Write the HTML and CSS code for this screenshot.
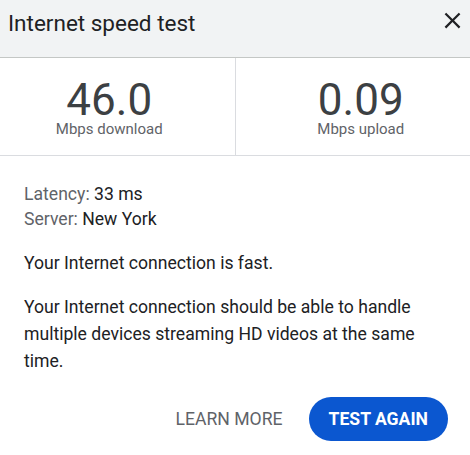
FILE: index.html
```html
<!DOCTYPE html>
<html>
<head>
<meta charset="utf-8">
<link rel="stylesheet" href="styles.css">
</head>
<body>
<div class="dialog">
  <div class="header">
    <div class="title">Internet speed test</div>
    <button class="close" aria-label="Close">
      <svg viewBox="0 0 24 24" width="27" height="27"><path d="M19 6.41 17.59 5 12 10.59 6.41 5 5 6.41 10.59 12 5 17.59 6.41 19 12 13.41 17.59 19 19 17.59 13.41 12z" fill="#202124"/></svg>
    </button>
  </div>
  <div class="stats">
    <div class="stat stat-down">
      <div class="num">46.0</div>
      <div class="unit">Mbps download</div>
    </div>
    <div class="stat stat-up">
      <div class="num">0.09</div>
      <div class="unit">Mbps upload</div>
    </div>
  </div>
  <div class="body">
    <div class="meta">
      <div><span class="key">Latency:</span> 33 ms</div>
      <div><span class="key">Server:</span> New York</div>
    </div>
    <p class="summary">Your Internet connection is fast.</p>
    <p class="desc">Your Internet connection should be able to handle multiple devices streaming HD videos at the same time.</p>
    <div class="actions">
      <button class="learn">LEARN MORE</button>
      <button class="again">TEST AGAIN</button>
    </div>
  </div>
</div>
</body>
</html>
```
FILE: styles.css
```css
html, body {
  margin: 0;
  padding: 0;
  background: #fff;
}
body {
  font-family: Roboto, "Liberation Sans", Arial, sans-serif;
  color: #202124;
}
.dialog {
  width: 470px;
}
.header {
  height: 57px;
  background: #f1f3f4;
  border-bottom: 1px solid #c4c7c5;
  display: flex;
  align-items: flex-start;
  justify-content: space-between;
  padding: 0 4px 0 8px;
}
.title {
  font-size: 22.5px;
  line-height: 28px;
  margin-top: 9px;
  color: #202124;
}
.close {
  border: 0;
  background: none;
  padding: 0;
  width: 27px;
  height: 27px;
  margin-top: 7px;
  display: flex;
}
.stats {
  display: flex;
  border-bottom: 1px solid #dadce0;
}
.stat {
  flex: 1;
  display: flex;
  flex-direction: column;
  align-items: center;
  padding: 20.5px 0 18.5px;
}
.stat-down {
  padding-right: 16px;
}
.stat-up {
  border-left: 1px solid #dadce0;
  padding-left: 16px;
}
.num {
  font-size: 44px;
  line-height: 43px;
  color: #3c4043;
}
.unit {
  font-size: 15px;
  line-height: 15px;
  color: #5f6368;
}
.body {
  padding: 26px 22px 0 24px;
  font-size: 17.6px;
}
.meta {
  line-height: 25px;
}
.key {
  color: #5f6368;
}
.summary {
  margin: 18px 0 0;
  line-height: 26.4px;
}
.desc {
  margin: 18px 0 0;
  line-height: 26.6px;
}
.actions {
  display: flex;
  justify-content: flex-end;
  align-items: center;
  gap: 26px;
  margin-top: 23px;
}
.learn {
  border: 0;
  background: none;
  font-family: inherit;
  font-size: 17.6px;
  color: #5f6368;
  padding: 0;
}
.again {
  border: 0;
  background: #0b57d0;
  color: #fff;
  font-family: inherit;
  font-size: 17.6px;
  font-weight: 700;
  height: 44px;
  padding: 0 20px;
  border-radius: 22px;
}
```
